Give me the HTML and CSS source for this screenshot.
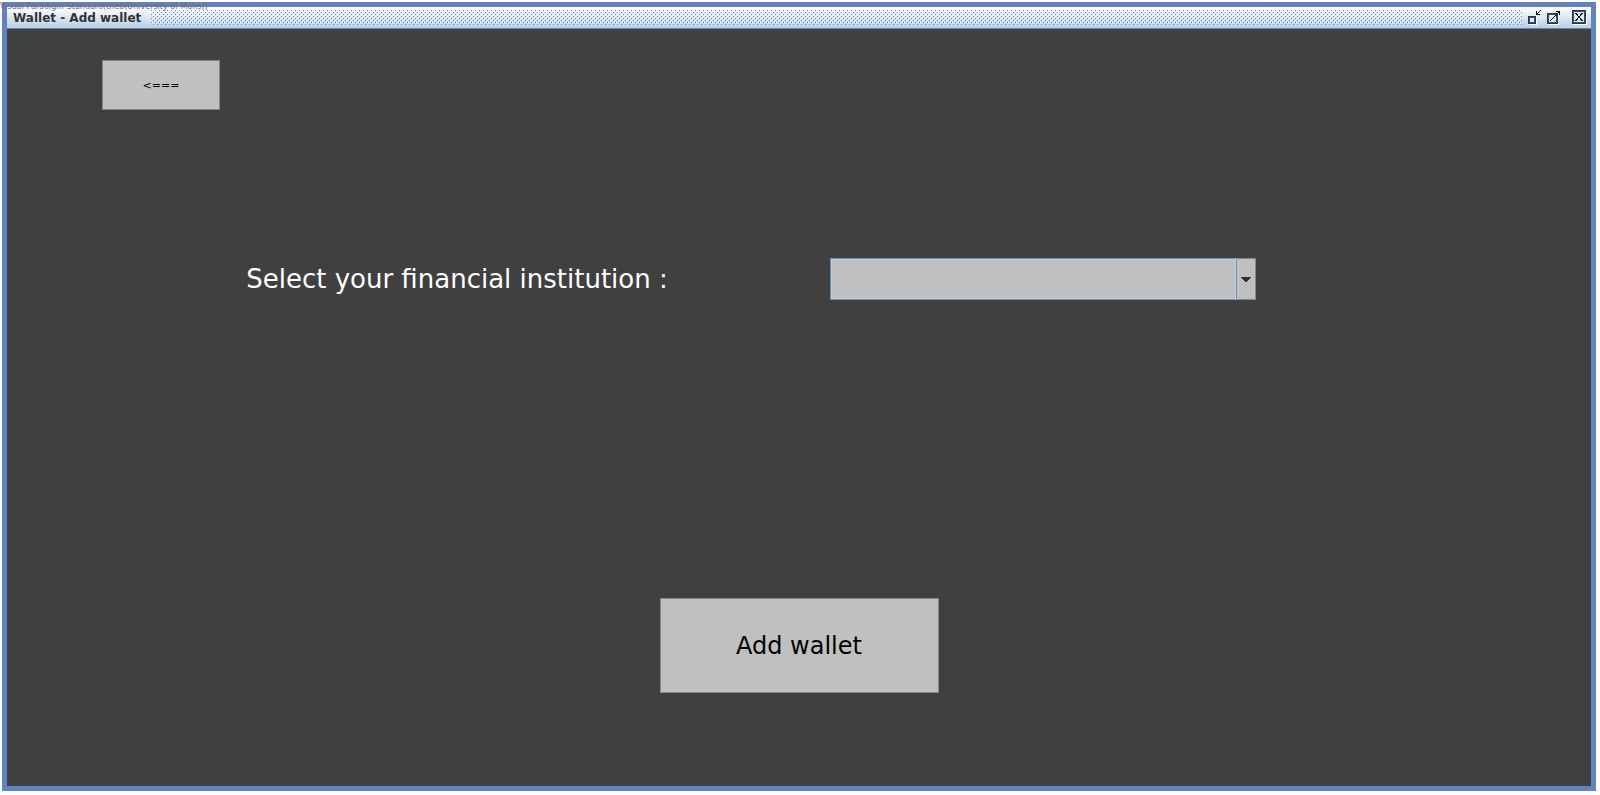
FILE: index.html
```html
<!DOCTYPE html>
<html lang="en">
<head>
<meta charset="utf-8">
<title>Wallet - Add wallet</title>
<link rel="stylesheet" href="styles.css">
</head>
<body>
<div class="watermark">Visual Paradigm Standard(theo(University of Mons))</div>
<div class="window">
  <header class="titlebar">
    <h1 class="title">Wallet - Add wallet</h1>
    <div class="grip"></div>
    <div class="controls">
      <button class="control" type="button" aria-label="Minimize">
        <svg width="16" height="17" viewBox="0 0 16 17" shape-rendering="crispEdges"><path d="M3 15.500h7.500V8" fill="none" stroke="#fff"/><path d="M2.500 7.500h7v7h-7z" fill="#dfeaf4" stroke="#26344f"/><path d="M3.500 8.500h5v5h-5z" fill="#dfeaf4" stroke="#3d5278"/><path d="M10 2h1v2h1v1h2v1h-4zM12 3h1v1h-1zM13 2h1v1h-1zM14 1h1v1h-1z" fill="#111"/></svg>
      </button>
      <button class="control" type="button" aria-label="Maximize">
        <svg width="16" height="17" viewBox="0 0 16 17" shape-rendering="crispEdges"><path d="M2 15.500h10.500V7" fill="none" stroke="#fff"/><path d="M1.500 4.500h10v10h-10z" fill="#dfeaf4" stroke="#26344f"/><path d="M2.500 5.500h8v8h-8z" fill="#dfeaf4" stroke="#3d5278"/><path d="M4 11h1v1H4zM5 10h1v1H5zM6 9h1v1H6zM7 8h1v1H7zM8 7h1v1H8zM9 6h1v1H9zM10 5h1v1h-1zM11 4h1v1h-1zM12 3h1v1h-1zM10 2h4v4h-1V3h-3z" fill="#111"/></svg>
      </button>
      <button class="control close" type="button" aria-label="Close">
        <svg width="16" height="17" viewBox="0 0 16 17" shape-rendering="crispEdges"><path d="M2 15.500h13.500V2" fill="none" stroke="#fff"/><path d="M1.500 1.500h13v13h-13z" fill="#dfeaf4" stroke="#26344f"/><path d="M2.500 2.500h11v11h-11z" fill="#dfeaf4" stroke="#3d5278"/><path d="M4 4h2v1H4zM5 5h2v1H5zM6 6h1v1H6zM7 7h2v2H7zM9 6h1v1H9zM9 5h2v1H9zM10 4h2v1h-2zM6 9h1v1H6zM5 10h2v1H5zM4 11h2v1H4zM9 9h1v1H9zM9 10h2v1H9zM10 11h2v1h-2z" fill="#111"/></svg>
      </button>
    </div>
  </header>
  <main class="content">
    <button class="button back" type="button">&lt;===</button>
    <div class="row">
      <label class="label" for="institution">Select your financial institution :</label>
      <div class="combo">
        <select class="select" id="institution"></select>
        <span class="arrow"><svg width="10" height="5" viewBox="0 0 10 5" shape-rendering="crispEdges"><path d="M0 0h10v1H9v1H8v1H7v1H6v1H4V4H3V3H2V2H1V1H0z" fill="#333"/></svg></span>
      </div>
    </div>
    <button class="button add" type="button">Add wallet</button>
  </main>
</div>
</body>
</html>
```
FILE: styles.css
```css
* { box-sizing: border-box; }
body {
  margin: 0;
  min-height: 100vh;
  display: flex;
  padding: 2px 4px 4px 2px;
  background: #fff;
  font-family: "DejaVu Sans", sans-serif;
  overflow: hidden;
}
.watermark {
  position: absolute;
  top: 2px;
  left: 0;
  font-size: 8px;
  line-height: 10px;
  color: #707070;
  white-space: nowrap;
}
.window {
  flex: 1;
  display: flex;
  flex-direction: column;
  border: 5px solid #6382bf;
}
.titlebar {
  display: flex;
  align-items: center;
  height: 22px;
  padding: 0 4px 0 6px;
  border-bottom: 1px solid #6382bf;
  background: linear-gradient(#fff, #b8cfe5);
}
.title {
  margin: 0 10px 0 0;
  font-size: 12px;
  line-height: 16px;
  font-weight: bold;
  color: #333;
}
.grip {
  flex: 1;
  height: 15px;
  background: url("data:image/svg+xml,%3Csvg xmlns='http://www.w3.org/2000/svg' width='4' height='4' shape-rendering='crispEdges'%3E%3Cpath d='M0 0h1v1H0zM2 2h1v1H2z' fill='%236382bf'/%3E%3Cpath d='M1 1h1v1H1zM3 3h1v1H3z' fill='%23fff'/%3E%3C/svg%3E");
}
.controls { display: flex; gap: 4px; padding-left: 4px; }
.control {
  width: 16px;
  height: 17px;
  padding: 0;
  border: 0;
  background: none;
}
.control svg { display: block; }
.close { margin-left: 5px; }
.content {
  flex: 1;
  display: flex;
  flex-direction: column;
  background: #404040;
}
.button {
  border: 1px solid #7a8a99;
  background: #c0c0c0;
  color: #000;
  font-family: inherit;
}
.back {
  width: 118px;
  height: 50px;
  margin: 31px 0 0 6%;
  font-size: 11px;
}
.row {
  display: grid;
  grid-template-columns: 583fr 426fr;
  align-items: center;
  margin: 148px 21.15% 0 15.1%;
}
.label {
  font-size: 26px;
  line-height: 32px;
  color: #fff;
}
.combo { position: relative; display: flex; }
.select {
  flex: 1;
  height: 42px;
  appearance: none;
  border: 1px solid #7a8a99;
  border-radius: 0;
  background: #c0c0c0;
  box-shadow: inset 0 0 0 1px #b8cfe5;
}
.arrow {
  position: absolute;
  top: 0;
  right: 0;
  bottom: 0;
  width: 20px;
  display: grid;
  place-items: center;
  border: 1px solid #7a8a99;
  background: #c0c0c0;
  box-shadow: -1px 0 0 #b8cfe5;
  pointer-events: none;
}
.add {
  align-self: center;
  width: 279px;
  height: 95px;
  margin: auto 0 93px;
  font-size: 24px;
}
```
